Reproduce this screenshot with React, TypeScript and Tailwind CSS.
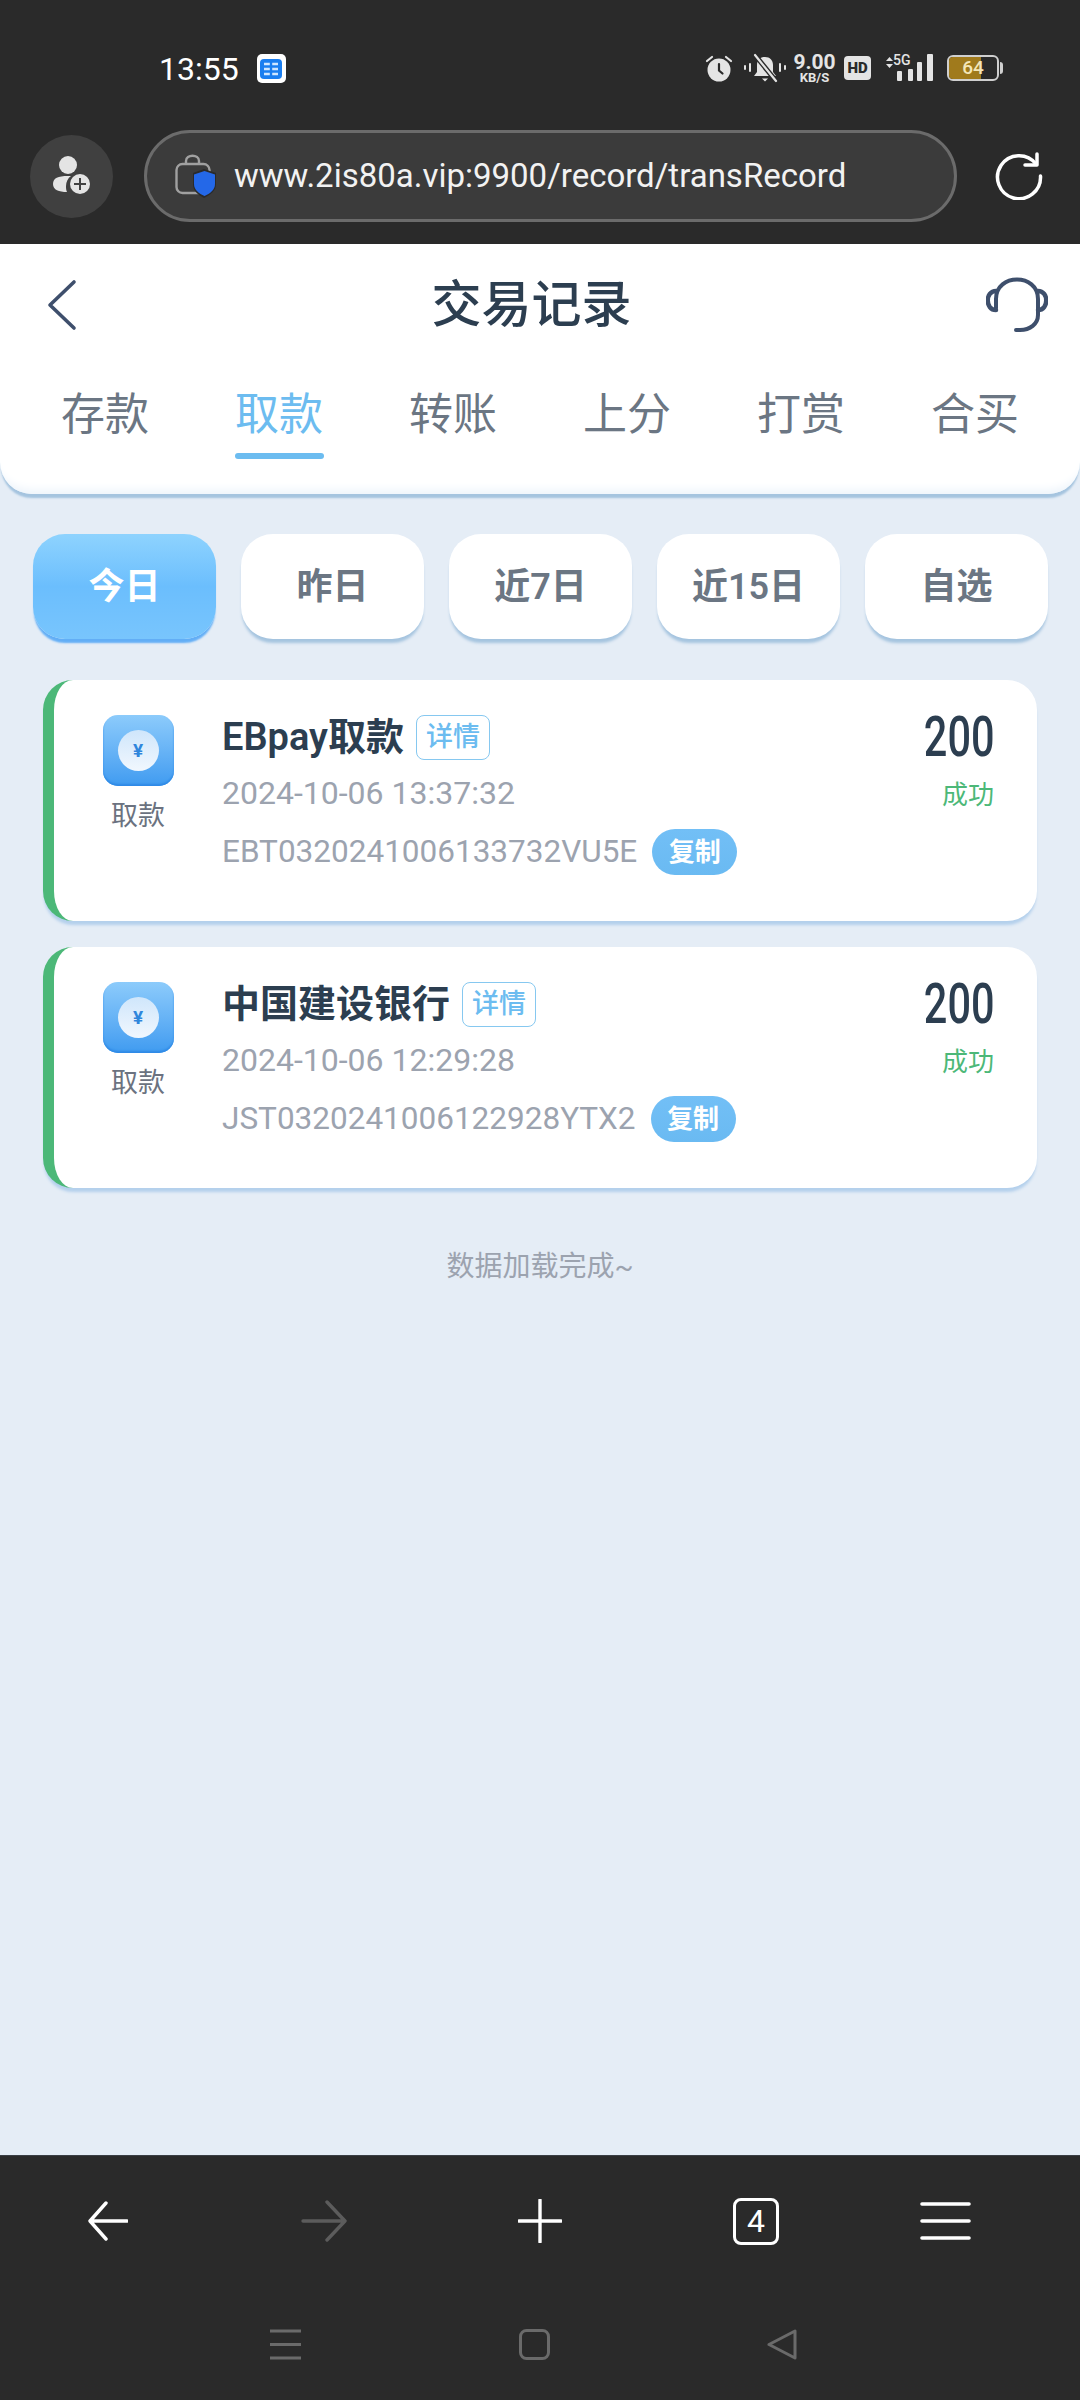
import React from 'react';

const FONT = { fontFamily: 'Roboto, "Noto Sans CJK SC", sans-serif' };

const TABS = ['存款', '取款', '转账', '上分', '打赏', '合买'];
const RANGES = ['今日', '昨日', '近7日', '近15日', '自选'];

const RECORDS = [
  { name: 'EBpay取款', time: '2024-10-06 13:37:32', orderNo: 'EBT032024100613​3732VU5E'.replace('\u200b', ''), amount: '200', status: '成功' },
  { name: '中国建设银行', time: '2024-10-06 12:29:28', orderNo: 'JST032024100612​2928YTX2'.replace('\u200b', ''), amount: '200', status: '成功' },
];

/* ─── Status bar icons ───────────────────────────────────────── */

function AlarmIcon() {
  return (
    <svg width="28" height="28" viewBox="0 0 28 28" className="shrink-0">
      <circle cx="14" cy="16" r="11.5" fill="#e4e4e4" />
      <path d="M14 10v6.5l3.5 3" fill="none" stroke="#2a2a2a" strokeWidth="2.2" strokeLinecap="round" />
      <path d="M2 7l5-4M26 7l-5-4" stroke="#e4e4e4" strokeWidth="2.2" strokeLinecap="round" />
    </svg>
  );
}

function MutedBellIcon() {
  return (
    <svg width="42" height="30" viewBox="0 0 42 30" className="shrink-0">
      <path d="M21 4c5 0 8 3.500 8 8v7l3 4H10l3-4v-7c0-4.500 3-8 8-8z" fill="#e4e4e4" />
      <path d="M18 25.500h6l-3 3z" fill="#e4e4e4" />
      <path d="M11 2l21 26" stroke="#2a2a2a" strokeWidth="5" />
      <path d="M11 2l21 26" stroke="#e4e4e4" strokeWidth="2.200" strokeLinecap="round" />
      <path d="M1 13v3M6 11v7M36 11v7M41 13v3" stroke="#e4e4e4" strokeWidth="2" strokeLinecap="round" />
    </svg>
  );
}

function SignalIcon() {
  return (
    <svg width="51" height="28" viewBox="0 0 51 28" className="shrink-0">
      <path d="M4 7l3.500-4 3.500 4zM4 10l3.500 4 3.500-4z" fill="#e4e4e4" />
      <rect x="15" y="17" width="5" height="10" rx="1" fill="#e4e4e4" />
      <rect x="26" y="15" width="5" height="12" rx="1" fill="#e4e4e4" />
      <rect x="35" y="8" width="5" height="19" rx="1" fill="#e4e4e4" />
      <rect x="45" y="0" width="6" height="27" rx="1" fill="#e4e4e4" />
    </svg>
  );
}

function ShieldLockIcon() {
  return (
    <svg width="42" height="46" viewBox="0 0 42 46" className="shrink-0">
      <rect x="1.500" y="11" width="33" height="29" rx="6" fill="none" stroke="#a0a0a0" strokeWidth="2.400" />
      <path d="M11 11V8c0-7 13-7 13 0v3" fill="none" stroke="#a0a0a0" strokeWidth="2.400" />
      <path d="M29 16l12 4v11c0 7-6 11-12 14-6-3-11-7-11-14V20z" fill="#2a2a2a" />
      <path d="M29.500 18l10.500 3.500v9.500c0 6-5 9.500-10.500 12-5.500-2.500-10.500-6-10.500-12v-9.500z" fill="#2468e8" />
    </svg>
  );
}

/* ─── Page icons ─────────────────────────────────────────────── */

function CoinIcon() {
  return (
    <div className="w-[71px] h-[71px] rounded-[15px] bg-gradient-to-b from-[#8ccbfb] to-[#3f9bf0] flex items-center justify-center shadow-[inset_0_-2px_2px_#2f8ae6]">
      <div className="w-[41px] h-[41px] rounded-full bg-gradient-to-b from-[#cfe6fb] to-[#f1f7fe] flex items-center justify-center text-[19px] font-bold leading-none text-[#2f86dc]">
        ¥
      </div>
    </div>
  );
}

function RecordCard({ record }: { record: (typeof RECORDS)[number] }) {
  return (
    <div className="h-[241px] rounded-[30px] border-l-[11px] border-[#4cb878] bg-white shadow-[0_5px_3px_-1px_#b4d0ec] flex pt-[35px] pr-[43px]">
      <div className="w-[168px] shrink-0 flex flex-col items-center">
        <CoinIcon />
        <span className="mt-[15px] text-[27px] leading-[30px] text-[#6b7280]">取款</span>
      </div>
      <div className="flex-1 min-w-0">
        <div className="flex items-center h-[44px]">
          <span className="text-[38px] leading-[44px] font-semibold text-[#2c3e50]">{record.name}</span>
          <span className="ml-[12px] w-[74px] h-[45px] rounded-[8px] border border-[#86c8f0] text-[27px] leading-[42px] font-medium text-center text-[#6cbcf0]">
            详情
          </span>
        </div>
        <div className="mt-[12px] text-[32px] leading-[44px] text-[#9ca3af]">{record.time}</div>
        <div className="mt-[14px] flex items-center h-[46px]">
          <span className="text-[31.500px] leading-[46px] text-[#9ca3af]">{record.orderNo}</span>
          <span className="ml-[15px] w-[85px] h-[46px] rounded-full bg-gradient-to-b from-[#72bff6] to-[#6abaf2] text-[26px] leading-[46px] font-bold text-center text-white">
            复制
          </span>
        </div>
      </div>
      <div className="shrink-0 flex flex-col items-end">
        <span className="text-[56px] leading-[44px] font-medium text-[#2c3e50] origin-right scale-x-[0.74]">{record.amount}</span>
        <span className="mt-[20px] text-[26px] leading-[32px] text-[#4cb878]">{record.status}</span>
      </div>
    </div>
  );
}

/* ─── Page ───────────────────────────────────────────────────── */

export default function App() {
  return (
    <div style={FONT} className="w-[1080px] h-[2400px] flex flex-col bg-[#e5edf6] overflow-hidden">
      {/* Status bar + browser address bar */}
      <div className="h-[244px] shrink-0 bg-[#2a2a2a]">
        <div className="h-[130px] flex items-start pt-[50px] pl-[159px] pr-[77px]">
          <span className="text-[32px] leading-[38px] text-white">13:55</span>
          <div className="ml-[18px] mt-[4px] w-[29px] h-[29px] rounded-[5px] bg-white flex items-center justify-center">
            <svg width="22" height="20" viewBox="0 0 22 20">
              <rect width="22" height="20" rx="4" fill="#1a7ef0" />
              <path d="M4 5h14M4 10h14M4 15h14" stroke="#cfe6ff" strokeWidth="2.400" />
              <path d="M11 1v18" stroke="#1a7ef0" strokeWidth="2.400" />
            </svg>
          </div>
          <div className="ml-auto flex items-center h-[32px] mt-[2px]">
            <AlarmIcon />
            <div className="ml-[11px]"><MutedBellIcon /></div>
            <div className="ml-[8px] w-[41px] flex flex-col items-center font-bold text-[#e4e4e4]">
              <span className="text-[21px] leading-[18px]">9.00</span>
              <span className="text-[13px] leading-[13px]">KB/S</span>
            </div>
            <div className="ml-[9px] w-[27px] h-[24px] rounded-[4px] bg-[#e4e4e4] text-[15px] leading-[24px] font-black text-center text-[#2a2a2a]">
              HD
            </div>
            <div className="relative ml-[11px]">
              <SignalIcon />
              <span className="absolute left-[11px] top-[-2px] text-[14px] leading-[16px] font-medium text-[#e4e4e4]">5G</span>
            </div>
            <div className="ml-[14px] relative w-[52px] h-[26px] rounded-[6px] border-2 border-[#cfcfcf] overflow-hidden">
              <div className="h-full w-[32px] bg-[#a07a1c]" />
              <span className="absolute inset-0 text-center text-[19px] leading-[22px] font-medium text-[#f4e6b8]">64</span>
            </div>
            <div className="ml-[1px] w-[3px] h-[12px] rounded-r bg-[#cfcfcf]" />
          </div>
        </div>
        <div className="flex items-center pl-[30px]">
          <div className="w-[83px] h-[83px] rounded-full bg-[#404040] flex items-center justify-center">
            <svg width="38" height="40" viewBox="0 0 38 40">
              <circle cx="15" cy="9" r="9" fill="#e4e4e4" />
              <path d="M0 28c0-6 5-8 15-8h3c-3 2-5 6-5 10 0 2 0 4 1 6C6 36 0 34 0 28z" fill="#e4e4e4" />
              <circle cx="27" cy="28" r="10" fill="#e4e4e4" />
              <path d="M27 22v12M21 28h12" stroke="#404040" strokeWidth="2" />
            </svg>
          </div>
          <div className="ml-[31px] w-[813px] h-[92px] rounded-full border-[3px] border-[#6b6b6b] bg-[#3b3b3b] flex items-center pl-[28px]">
            <ShieldLockIcon />
            <span className="ml-[17px] text-[33px] leading-[40px] text-[#f2f2f2]">www.2is80a.vip:9900/record/transRecord</span>
          </div>
          <div className="ml-[38px]">
            <svg width="48" height="48" viewBox="0 0 48 48" fill="none" stroke="#fff" strokeWidth="3.500" strokeLinecap="round" strokeLinejoin="round">
              <path d="M41 12A21.500 21.500 0 1 0 45.500 24" />
              <path d="M30 13h12V2" />
            </svg>
          </div>
        </div>
      </div>

      {/* Title + record type tabs */}
      <header className="h-[250px] shrink-0 rounded-b-[32px] bg-white shadow-[0_5px_2px_-1px_#a5c4df,inset_0_-14px_10px_-10px_#edf4fb]">
        <div className="h-[122px] flex items-center justify-between pl-[47px] pr-[32px]">
          <svg width="30" height="52" viewBox="0 0 30 52" fill="none" stroke="#3e4f6c" strokeWidth="3.600" strokeLinecap="round" strokeLinejoin="round">
            <path d="M27 3L3 26l24 23" />
          </svg>
          <h1 className="text-[50px] leading-[60px] font-medium text-[#2c3e50]">交易记录</h1>
          <svg width="62" height="56" viewBox="0 0 62 56" fill="none" stroke="#3e4f6c" strokeWidth="4" strokeLinecap="round">
            <path d="M10 31V22C10 -4 52 -4 52 22v16c0 9-8 15-18 15h-4" />
            <path d="M10 14C-1 14-1 33 10 33" strokeWidth="4.500" />
            <path d="M52 14c11 0 11 19 0 19" strokeWidth="4.500" />
          </svg>
        </div>
        <nav className="grid grid-cols-6 px-[18px] pt-[21px]">
          {TABS.map((tab, i) => (
            <div key={tab} className="flex flex-col items-center">
              <span className={`text-[44px] leading-[56px] ${i === 1 ? 'text-[#6cbcf0]' : 'text-[#6b7683]'}`}>{tab}</span>
              {i === 1 && <div className="mt-[10px] w-[89px] h-[6px] rounded-full bg-[#6cbcf0]" />}
            </div>
          ))}
        </nav>
      </header>

      {/* Date range chips */}
      <div className="shrink-0 mt-[40px] flex gap-[25px] pl-[33px]">
        {RANGES.map((range, i) => (
          <button
            key={range}
            type="button"
            className={
              i === 0
                ? 'w-[183px] h-[105px] rounded-[32px] bg-gradient-to-b from-[#8ed3fe] via-[#6bbefd] to-[#78c5fd] text-[36px] font-bold text-white shadow-[0_5px_2px_-1px_#62aef6]'
                : 'w-[183px] h-[105px] rounded-[32px] bg-white text-[36px] font-semibold text-[#6b7683] shadow-[0_5px_3px_-1px_#a5c4df]'
            }
          >
            {range}
          </button>
        ))}
      </div>

      {/* Records */}
      <main className="flex-1 flex flex-col px-[43px] pt-[41px]">
        <div className="flex flex-col gap-[26px]">
          {RECORDS.map((r) => (
            <RecordCard key={r.orderNo} record={r} />
          ))}
        </div>
        <p className="mt-[62px] text-center text-[28px] leading-[34px] text-[#9ca3af]">数据加载完成~</p>
      </main>

      {/* Browser toolbar + system navigation */}
      <footer className="h-[245px] shrink-0 bg-[#2a2a2a] border-t border-[#3a3f45]">
        <div className="h-[131px] grid grid-cols-5 items-center pb-[1px]">
          <div className="flex justify-center">
            <svg width="40" height="40" viewBox="0 0 40 40" fill="none" stroke="#fff" strokeWidth="3.400" strokeLinecap="round" strokeLinejoin="round">
              <path d="M18 2L2 20l16 18M3 20h36" />
            </svg>
          </div>
          <div className="flex justify-center">
            <svg width="46" height="42" viewBox="0 0 46 42" fill="none" stroke="#5c5c5c" strokeWidth="3.400" strokeLinecap="round" strokeLinejoin="round">
              <path d="M26 2l18 19-18 19M2 21h42" />
            </svg>
          </div>
          <div className="flex justify-center">
            <svg width="44" height="44" viewBox="0 0 44 44" fill="none" stroke="#fff" strokeWidth="3.400" strokeLinecap="round">
              <path d="M22 1v42M1 22h42" />
            </svg>
          </div>
          <div className="flex justify-center">
            <div className="w-[46px] h-[47px] rounded-[8px] border-[3px] border-white text-[32px] leading-[40px] text-center text-white">4</div>
          </div>
          <div className="flex justify-start pl-[56px]">
            <svg width="51" height="38" viewBox="0 0 51 38" fill="none" stroke="#fff" strokeWidth="3.600" strokeLinecap="round">
              <path d="M2 2h47M2 19h47M2 36h47" />
            </svg>
          </div>
        </div>
        <div className="flex items-start pl-[270px] pt-[42px]">
          <svg width="31" height="31" viewBox="0 0 31 31" fill="none" stroke="#6a6a6a" strokeWidth="3">
            <path d="M0 2h31M0 15.500h31M0 29h31" />
          </svg>
          <svg width="31" height="31" viewBox="0 0 31 31" fill="none" stroke="#6a6a6a" strokeWidth="3" className="ml-[218px]">
            <rect x="1.500" y="1.500" width="28" height="28" rx="6" />
          </svg>
          <svg width="30" height="31" viewBox="0 0 30 31" fill="none" stroke="#6a6a6a" strokeWidth="3" strokeLinejoin="round" className="ml-[217px]">
            <path d="M28 2v27L2 15.500z" />
          </svg>
        </div>
      </footer>
    </div>
  );
}
